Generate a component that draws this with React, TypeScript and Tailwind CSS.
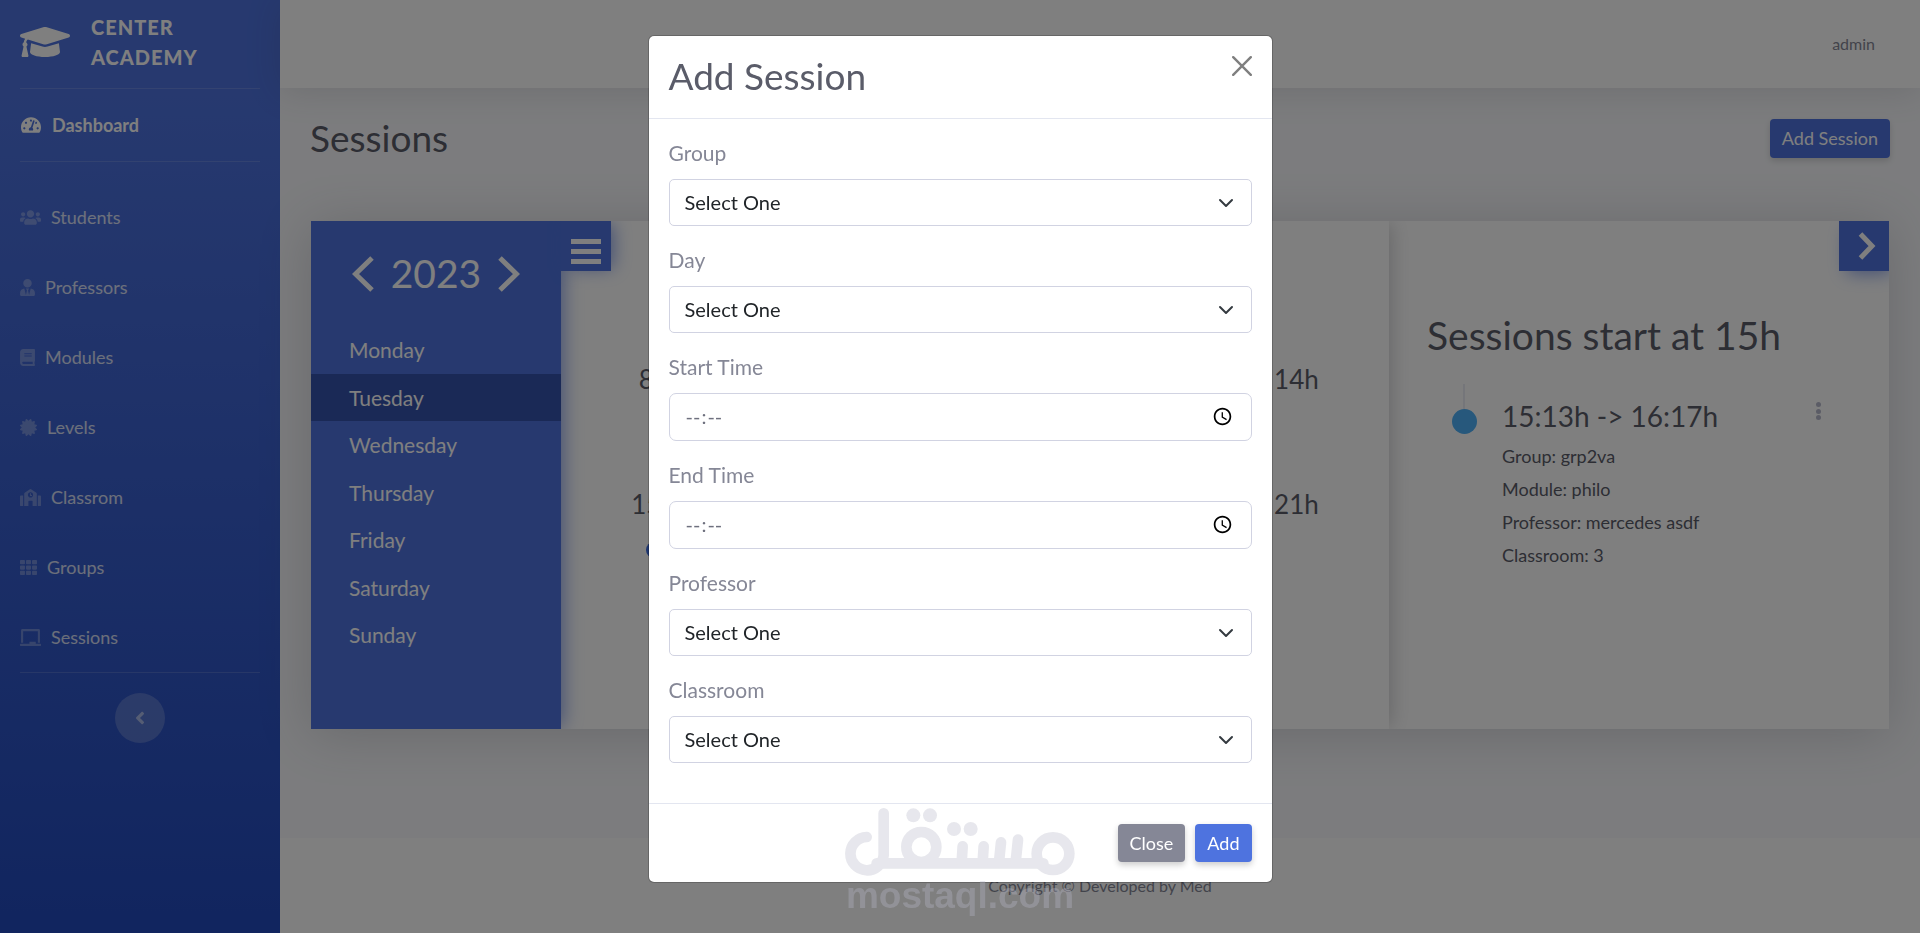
import { useState } from "react";
import type { ReactNode } from "react";
import {
  FaAngleLeft,
  FaBook,
  FaCertificate,
  FaChalkboard,
  FaGraduationCap,
  FaSchool,
  FaTachometerAlt,
  FaTh,
  FaUsers,
  FaUserTie,
} from "react-icons/fa";

const NAV = [
  { text: "Students", Icon: FaUsers, width: "w-[21px]" },
  { text: "Professors", Icon: FaUserTie, width: "w-[15px]" },
  { text: "Modules", Icon: FaBook, width: "w-[15px]" },
  { text: "Levels", Icon: FaCertificate, width: "w-[17px]" },
  { text: "Classrom", Icon: FaSchool, width: "w-[21px]" },
  { text: "Groups", Icon: FaTh, width: "w-[17px]" },
  { text: "Sessions", Icon: FaChalkboard, width: "w-[21px]" },
];

const DAYS = ["Monday", "Tuesday", "Wednesday", "Thursday", "Friday", "Saturday", "Sunday"];
const HOURS = [8, 9, 10, 11, 12, 13, 14, 15, 16, 17, 18, 19, 20, 21];

function App() {
  const [open, setOpen] = useState(true);

  return (
    <div className="flex min-h-screen bg-[#f8f9fc] font-['Lato','Open_Sans',sans-serif] text-[#858796]">
      <Sidebar />
      <div className="flex min-w-0 flex-1 flex-col">
        <header className="flex h-[88px] items-center justify-end bg-white pr-[45px] shadow-[0_3px_35px_rgba(58,59,69,0.15)]">
          <a href="#admin" className="text-[16px]">
            admin
          </a>
        </header>
        <main className="flex-1 px-[30px] pt-[29px] pb-10">
          <div className="mb-[62px] flex h-[42px] items-center justify-between">
            <h1 className="text-[37px] leading-[40px] text-[#5a5c69]">Sessions</h1>
            <button
              type="button"
              onClick={() => setOpen(true)}
              className="h-[39px] rounded-[4px] bg-[#4e73df] px-3 text-[18px] text-white shadow-[0_3px_6px_rgba(0,0,0,0.15)]"
            >
              Add Session
            </button>
          </div>
          <Calendar />
        </main>
        <footer className="flex h-[95px] items-center justify-center bg-white text-[16px]">
          Copyright © Developed by Med
        </footer>
      </div>
      {open && <SessionModal onClose={() => setOpen(false)} />}
      <Watermark />
    </div>
  );
}

export default App;

function Sidebar() {
  return (
    <nav className="w-[280px] shrink-0 bg-[linear-gradient(180deg,#4e73df_10%,#224abe_100%)] px-5 text-[18px] text-white/80">
      <a href="#home" className="flex h-[88px] items-center gap-[21px] pb-1 text-white">
        <FaGraduationCap className="h-10 w-[50px]" />
        <span className="text-[20px] leading-[30px] font-black tracking-[1px]">
          CENTER
          <br />
          ACADEMY
        </span>
      </a>
      <hr className="border-white/15" />
      <a href="#dashboard" className="flex h-[72px] items-center gap-[11px] pl-px font-bold text-white">
        <FaTachometerAlt className="h-[18px] w-5" />
        Dashboard
      </a>
      <hr className="mb-5 border-white/15" />
      {NAV.map(({ text, Icon, width }) => (
        <a key={text} href={`#${text}`} className="flex h-[70px] items-center gap-[10px]">
          <Icon className={`h-[17px] text-white/30 ${width}`} />
          {text}
        </a>
      ))}
      <hr className="mb-5 border-white/15" />
      <button
        type="button"
        aria-label="Collapse sidebar"
        className="mx-auto flex size-[50px] items-center justify-center rounded-full bg-white/20 text-white/50"
      >
        <FaAngleLeft className="size-5" />
      </button>
    </nav>
  );
}

function Calendar() {
  return (
    <section className="mx-px flex h-[508px] overflow-clip bg-white shadow-[0_5px_50px_rgba(58,59,69,0.2)]">
      {/* Days of the week */}
      <div className="relative z-20 w-[250px] shrink-0 bg-[#4e73df] text-white shadow-[5px_0_18px_-3px_rgba(78,115,223,0.7)]">
        <div className="flex h-[105px] items-center justify-center gap-[17px]">
          <button type="button" aria-label="Previous year">
            <Arrow left />
          </button>
          <span className="text-[39px]">2023</span>
          <button type="button" aria-label="Next year">
            <Arrow />
          </button>
        </div>
        <ul className="grid h-[333px] grid-rows-7 text-[21px]">
          {DAYS.map((day) => (
            <li
              key={day}
              className={`flex items-center pl-[38px] ${day === "Tuesday" ? "bg-[#3452ac]" : ""}`}
            >
              {day}
            </li>
          ))}
        </ul>
        <button
          type="button"
          aria-label="Toggle days"
          className="absolute top-0 left-full flex size-[50px] flex-col items-center justify-center gap-[5px] bg-[#4e73df] pt-[11px] shadow-[5px_0_18px_-3px_rgba(78,115,223,0.7)]"
        >
          <span className="h-[5px] w-[30px] bg-white" />
          <span className="h-[5px] w-[30px] bg-white" />
          <span className="h-[5px] w-[30px] bg-white" />
        </button>
      </div>

      {/* Hours */}
      <div className="relative z-10 min-w-0 flex-1 bg-white px-[39px] pt-24 shadow-[5px_0_18px_-3px_rgba(58,59,69,0.25)]">
        <div className="grid grid-cols-7 text-center text-[26px] text-[#5a5c69]">
          {HOURS.map((hour) => (
            <div key={hour} className="flex h-[125px] flex-col items-center pt-[42px] leading-[40px]">
              {hour}h
              {hour === 15 && <span className="mt-[18px] size-4 shrink-0 rounded-full bg-[#3b6be0]" />}
            </div>
          ))}
        </div>
      </div>

      {/* Sessions of the chosen hour */}
      <div className="relative w-[500px] shrink-0 pt-[90px] pl-[38px] text-[#5a5c69]">
        <button
          type="button"
          aria-label="Hide sessions"
          className="absolute top-0 right-0 flex size-[50px] items-center justify-center bg-[#4e73df] pl-[6px] text-white shadow-[5px_5px_18px_-3px_rgba(78,115,223,0.7)]"
        >
          <svg viewBox="0 0 18 28" className="h-7 w-[18px]" fill="none" stroke="currentColor" strokeWidth="5">
            <path d="M2.5 2L14 14L2.5 26" />
          </svg>
        </button>
        <h2 className="text-[39px] leading-[48px]">Sessions start at 15h</h2>
        <div className="mt-[25px] flex pl-6">
          <div className="flex w-[26px] flex-col items-center">
            <span className="h-[25px] w-[2px] bg-[#eaecf4]" />
            <span className="size-[25px] rounded-full bg-[#4eb1f8]" />
          </div>
          <div className="flex-1 pt-[13px] pl-[25px]">
            <h3 className="text-[28px] leading-[38px]">15:13h -&gt; 16:17h</h3>
            <div className="pt-[5px] text-[18px] leading-[33px]">
              <p>Group: grp2va</p>
              <p>Module: philo</p>
              <p>Professor: mercedes asdf</p>
              <p>Classroom: 3</p>
            </div>
          </div>
          <button
            type="button"
            aria-label="Session menu"
            className="mt-[18px] mr-[67px] flex h-[18px] w-[6px] flex-col justify-between text-[#b7b9cc]"
          >
            <span className="size-[5px] rounded-full bg-current" />
            <span className="size-[5px] rounded-full bg-current" />
            <span className="size-[5px] rounded-full bg-current" />
          </button>
        </div>
      </div>
    </section>
  );
}

function Arrow({ left }: { left?: boolean }) {
  return (
    <svg viewBox="0 0 22 36" className="h-9 w-[22px]" fill="none" stroke="currentColor" strokeWidth="5">
      <path d={left ? "M20 2L3.5 18L20 34" : "M2 2L18.5 18L2 34"} />
    </svg>
  );
}

function SessionModal({ onClose }: { onClose: () => void }) {
  return (
    <div className="fixed inset-0 z-40 overflow-y-auto bg-black/50">
      <form
        role="dialog"
        aria-label="Add Session"
        className="mx-auto mt-[35px] w-[625px] max-w-full rounded-[6px] border border-black/20 bg-white bg-clip-padding"
      >
        <div className="flex items-start justify-between border-b border-[#e3e6f0] p-5">
          <h2 className="text-[37px] leading-[40px] text-[#5a5c69]">Add Session</h2>
          <button type="button" aria-label="Dismiss" onClick={onClose} className="mb-[22px] text-[#7f7f7f]">
            <svg viewBox="0 0 20 20" className="size-5" fill="none" stroke="currentColor" strokeWidth="2.4" strokeLinecap="round">
              <path d="M1.2 1.2L18.8 18.8M18.8 1.2L1.2 18.8" />
            </svg>
          </button>
        </div>
        <div className="p-5 text-[20px]">
          <SelectField id="group" label="Group" />
          <SelectField id="day" label="Day" />
          <TimeField id="start" label="Start Time" />
          <TimeField id="end" label="End Time" />
          <SelectField id="professor" label="Professor" />
          <SelectField id="classroom" label="Classroom" />
        </div>
        <div className="flex justify-end gap-[10px] border-t border-[#e3e6f0] p-5">
          <FooterButton className="bg-[#858796]" onClick={onClose}>
            Close
          </FooterButton>
          <FooterButton className="bg-[#4e73df]">Add</FooterButton>
        </div>
      </form>
    </div>
  );
}

interface FieldProps {
  id: string;
  label: string;
}

function SelectField({ id, label }: FieldProps) {
  return (
    <div className="mb-5">
      <label htmlFor={id} className="mb-3 block text-[21px] leading-[28px]">
        {label}
      </label>
      <div className="relative">
        <select
          id={id}
          className="block h-[47px] w-full appearance-none rounded-[5px] border border-[#d1d3e2] bg-white px-[15px] pb-[2px] text-[#212529]"
        >
          <option>Select One</option>
        </select>
        <svg
          viewBox="0 0 16 16"
          className="pointer-events-none absolute top-4 right-[18px] size-4"
          fill="none"
          stroke="#343a40"
          strokeWidth="2"
          strokeLinecap="round"
          strokeLinejoin="round"
        >
          <path d="M2 5l6 6 6-6" />
        </svg>
      </div>
    </div>
  );
}

function TimeField({ id, label }: FieldProps) {
  return (
    <div className="mb-5">
      <label htmlFor={id} className="mb-3 block text-[21px] leading-[28px]">
        {label}
      </label>
      <input
        id={id}
        type="time"
        className="block h-12 w-full rounded-[7px] border border-[#d1d3e2] bg-white px-[15px] pb-[2px] text-[#6e707e] [&::-webkit-datetime-edit-ampm-field]:hidden"
      />
    </div>
  );
}

interface FooterButtonProps {
  className: string;
  onClick?: () => void;
  children: ReactNode;
}

function FooterButton({ className, onClick, children }: FooterButtonProps) {
  return (
    <button
      type="button"
      onClick={onClick}
      className={`h-[38px] rounded-[4px] px-3 text-[18px] text-white shadow-[0_3px_6px_rgba(0,0,0,0.2)] ${className}`}
    >
      {children}
    </button>
  );
}

function Watermark() {
  return (
    <div className="pointer-events-none fixed inset-x-0 bottom-[18px] z-50 flex flex-col items-center text-[#b9bac9] opacity-[0.34]">
      <svg viewBox="75 54 690 204" className="h-[68px] w-[230px]" fill="none" stroke="currentColor" strokeWidth="32" strokeLinecap="round">
        <circle cx="699" cy="191" r="49" />
        <circle cx="304" cy="171" r="45" />
        <path d="M140 141A50 50 0 1 0 191 196V70" />
        <path d="M170 220H670" />
        <path d="M594 149L587 216M543 157L537 216M491 169L488 216M428 169L425 216" />
        <g fill="currentColor" stroke="none">
          <circle cx="280" cy="76" r="21" />
          <circle cx="330" cy="76" r="21" />
          <circle cx="402" cy="117" r="21" />
          <circle cx="452" cy="117" r="21" />
        </g>
      </svg>
      <span className="font-['Liberation_Sans',Arial,sans-serif] text-[37px] leading-[39px] font-bold">
        mostaql.com
      </span>
    </div>
  );
}
